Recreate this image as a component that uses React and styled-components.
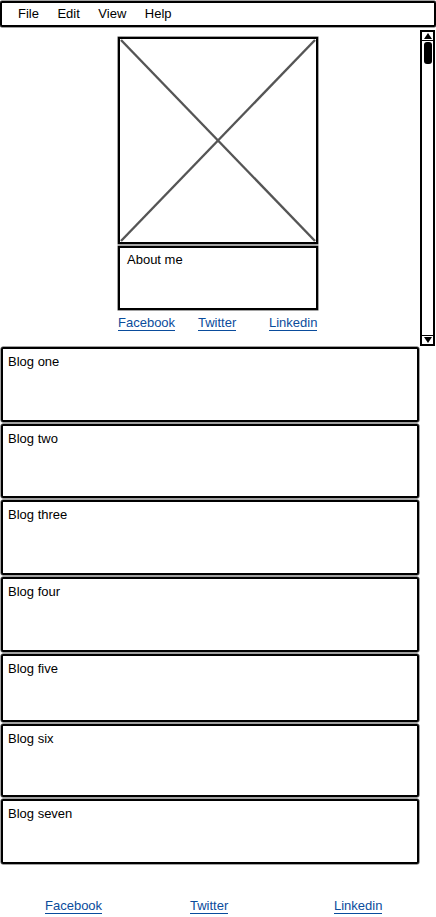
import React from "react";
import styled, { createGlobalStyle } from "styled-components";

const Global = createGlobalStyle`
  html, body { margin: 0; padding: 0; background: #fff; }
  body { font-family: "Liberation Sans", Arial, sans-serif; color: #000; }
`;

const Page = styled.div`
  width: 436px;
  height: 917px;
  display: flex;
  flex-direction: column;
  overflow: hidden;
  font-size: 13px;
`;

const MenuBar = styled.div`
  margin: 1px 0 0 0;
  height: 26px;
  box-sizing: border-box;
  border: 2px solid #000;
  border-radius: 2px;
  box-shadow: 0 0 0 0.5px #444;
  display: flex;
  align-items: center;
  gap: 18.5px;
  padding-left: 16px;
  padding-bottom: 2px;
  font-size: 13px;
`;

const MenuItem = styled.span`
  line-height: 1;
`;

const TopArea = styled.div`
  display: flex;
  margin-top: 3px;
  height: 317px;
`;

const ProfileCol = styled.div`
  margin-left: 118px;
  margin-top: 7px;
  width: 200px;
  display: flex;
  flex-direction: column;
`;

const ImageBox = styled.div`
  width: 200px;
  height: 207px;
  box-sizing: border-box;
  border: 2px solid #000;
  box-shadow: 0 0 0 0.5px #444;
  display: flex;
  svg { display: block; }
`;

const AboutBox = styled.div`
  margin-top: 2px;
  height: 64px;
  box-sizing: border-box;
  border: 2px solid #000;
  box-shadow: 0 0 0 0.5px #444;
  padding: 4px 7px;
  font-size: 13px;
`;

const LinkRow = styled.div`
  display: grid;
  grid-template-columns: ${(p) => p.$cols};
  padding-left: ${(p) => p.$pad || 0}px;
  margin-top: ${(p) => p.$top}px;
`;

const Link = styled.a`
  color: #0a4c9c;
  text-decoration: none;
  border-bottom: 1.5px solid #0a4c9c;
  font-size: 13px;
  line-height: 15px;
  justify-self: start;
`;

const Scrollbar = styled.div`
  margin-left: auto;
  margin-right: 1px;
  width: 15px;
  height: 316px;
  box-sizing: border-box;
  border: 2px solid #000;
  display: flex;
  flex-direction: column;
  align-items: center;
`;

const ScrollBtn = styled.div`
  width: 100%;
  height: 9px;
  display: flex;
  align-items: center;
  justify-content: center;
  box-sizing: border-box;
  ${(p) => (p.$down ? "border-top: 1px solid #000;" : "border-bottom: 1px solid #000;")}
`;

const Thumb = styled.div`
  margin-top: 1px;
  width: 8px;
  height: 22px;
  background: #000;
  border-radius: 3px;
`;

const Track = styled.div`
  flex: 1;
`;

const BlogList = styled.div`
  display: flex;
  flex-direction: column;
  gap: 2px;
  width: 418px;
  margin-left: 1px;
`;

const BlogCard = styled.div`
  height: ${(p) => p.$h}px;
  box-sizing: border-box;
  border: 2px solid #000;
  border-radius: 2px;
  box-shadow: 0 0 0 0.5px #444;
  padding: 5px 5px;
  font-size: 13px;
  line-height: 16px;
`;

const blogs = [
  ["Blog one", 75],
  ["Blog two", 74],
  ["Blog three", 75],
  ["Blog four", 75],
  ["Blog five", 68],
  ["Blog six", 73],
  ["Blog seven", 65],
];

export default function App() {
  return (
    <>
      <Global />
      <Page>
        <MenuBar>
          <MenuItem>File</MenuItem>
          <MenuItem>Edit</MenuItem>
          <MenuItem>View</MenuItem>
          <MenuItem>Help</MenuItem>
        </MenuBar>
        <TopArea>
          <ProfileCol>
            <ImageBox>
              <svg width="196" height="203" viewBox="0 0 196 203">
                <line x1="1" y1="1" x2="195" y2="202" stroke="#555" strokeWidth="2.4" />
                <line x1="195" y1="1" x2="1" y2="202" stroke="#555" strokeWidth="2.4" />
              </svg>
            </ImageBox>
            <AboutBox>About me</AboutBox>
            <LinkRow $cols="80px 71px auto" $top={5}>
              <Link href="#">Facebook</Link>
              <Link href="#">Twitter</Link>
              <Link href="#">Linkedin</Link>
            </LinkRow>
          </ProfileCol>
          <Scrollbar>
            <ScrollBtn>
              <svg width="8" height="6" viewBox="0 0 8 6"><polygon points="0,6 8,6 4,0" fill="#000" /></svg>
            </ScrollBtn>
            <Thumb />
            <Track />
            <ScrollBtn $down>
              <svg width="8" height="6" viewBox="0 0 8 6"><polygon points="0,0 8,0 4,6" fill="#000" /></svg>
            </ScrollBtn>
          </Scrollbar>
        </TopArea>
        <BlogList>
          {blogs.map(([t, h]) => (
            <BlogCard key={t} $h={h}>{t}</BlogCard>
          ))}
        </BlogList>
        <LinkRow $cols="145px 144px auto" $pad={45} $top={34}>
          <Link href="#">Facebook</Link>
          <Link href="#">Twitter</Link>
          <Link href="#">Linkedin</Link>
        </LinkRow>
      </Page>
    </>
  );
}
